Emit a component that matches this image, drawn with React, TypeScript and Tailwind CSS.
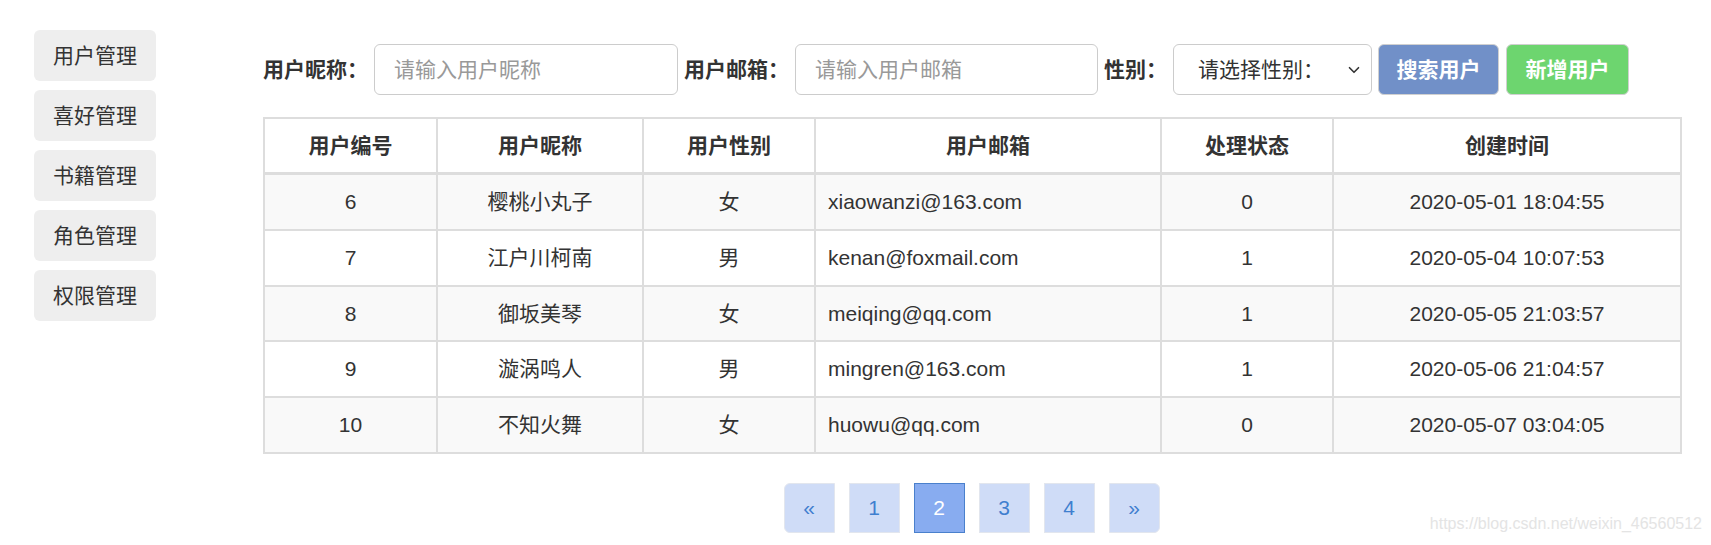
import { ChevronDown } from "lucide-react";

type User = {
  id: number;
  nickname: string;
  gender: string;
  email: string;
  status: number;
  createdAt: string;
};

const users: User[] = [
  { id: 6, nickname: "樱桃小丸子", gender: "女", email: "xiaowanzi@163.com", status: 0, createdAt: "2020-05-01 18:04:55" },
  { id: 7, nickname: "江户川柯南", gender: "男", email: "kenan@foxmail.com", status: 1, createdAt: "2020-05-04 10:07:53" },
  { id: 8, nickname: "御坂美琴", gender: "女", email: "meiqing@qq.com", status: 1, createdAt: "2020-05-05 21:03:57" },
  { id: 9, nickname: "漩涡鸣人", gender: "男", email: "mingren@163.com", status: 1, createdAt: "2020-05-06 21:04:57" },
  { id: 10, nickname: "不知火舞", gender: "女", email: "huowu@qq.com", status: 0, createdAt: "2020-05-07 03:04:05" },
];

const menu = ["用户管理", "喜好管理", "书籍管理", "角色管理", "权限管理"];

const headers = ["用户编号", "用户昵称", "用户性别", "用户邮箱", "处理状态", "创建时间"];

const Sidebar = () => (
  <div className="w-[263px] shrink-0 pl-[34px] pt-[30px] flex flex-col gap-[9px]">
    {menu.map((item) => (
      <button
        key={item}
        className="w-[122px] h-[51px] rounded-[6px] bg-[#eeeeee] text-[21px] text-[#333] flex items-center justify-center"
      >
        {item}
      </button>
    ))}
  </div>
);

const SearchBar = () => (
  <div className="flex items-center h-[51px] gap-[6px]">
    <span className="text-[21px] font-bold text-[#333]">用户昵称：</span>
    <input
      placeholder="请输入用户昵称"
      className="w-[304px] h-[51px] rounded-[6px] border border-[#cccccc] px-[19px] text-[21px] text-[#555] placeholder:text-[#999] outline-none"
    />
    <span className="text-[21px] font-bold text-[#333]">用户邮箱：</span>
    <input
      placeholder="请输入用户邮箱"
      className="w-[303px] h-[51px] rounded-[6px] border border-[#cccccc] px-[19px] text-[21px] text-[#555] placeholder:text-[#999] outline-none"
    />
    <span className="text-[21px] font-bold text-[#333]">性别：</span>
    <div className="relative w-[199px] h-[51px]">
      <select className="appearance-none w-full h-full rounded-[6px] border border-[#cccccc] bg-white pl-[24px] text-[21px] text-[#333] outline-none">
        <option>请选择性别：</option>
        <option>男</option>
        <option>女</option>
      </select>
      <ChevronDown
        size={18}
        strokeWidth={2.2}
        className="absolute right-[9px] top-[17px] text-[#333] pointer-events-none"
      />
    </div>
    <button className="w-[121px] h-[51px] rounded-[6px] border border-[#d0d0d0] bg-[#7190c8] text-white text-[21px] font-bold">
      搜索用户
    </button>
    <button className="w-[123px] h-[51px] rounded-[6px] border border-[#d0d0d0] bg-[#6dd56f] text-white text-[21px] font-bold ml-[1px]">
      新增用户
    </button>
  </div>
);

const UserTable = () => (
  <table className="w-[1417px] table-fixed border-collapse border-2 border-[#dddddd] text-[21px] text-[#333] mt-[22px]">
    <colgroup>
      <col className="w-[173px]" />
      <col className="w-[206px]" />
      <col className="w-[172px]" />
      <col className="w-[346px]" />
      <col className="w-[172px]" />
      <col className="w-[348px]" />
    </colgroup>
    <thead>
      <tr>
        {headers.map((h) => (
          <th
            key={h}
            className="border-2 border-b-[3px] border-[#dddddd] py-[11px] leading-[31px] font-bold text-center"
          >
            {h}
          </th>
        ))}
      </tr>
    </thead>
    <tbody>
      {users.map((u, i) => (
        <tr key={u.id} className={i % 2 === 0 ? "bg-[#f9f9f9]" : "bg-white"}>
          <td className="border-2 border-[#dddddd] py-[11px] leading-[31.8px] text-center">{u.id}</td>
          <td className="border-2 border-[#dddddd] py-[11px] leading-[31.8px] text-center">{u.nickname}</td>
          <td className="border-2 border-[#dddddd] py-[11px] leading-[31.8px] text-center">{u.gender}</td>
          <td className="border-2 border-[#dddddd] py-[11px] leading-[31.8px] text-left px-[12px]">{u.email}</td>
          <td className="border-2 border-[#dddddd] py-[11px] leading-[31.8px] text-center">{u.status}</td>
          <td className="border-2 border-[#dddddd] py-[11px] leading-[31.8px] text-center">{u.createdAt}</td>
        </tr>
      ))}
    </tbody>
  </table>
);

const Pagination = () => {
  const pages = ["«", "1", "2", "3", "4", "»"];
  return (
    <div className="w-[1417px] flex justify-center mt-[29px]">
      <div className="flex gap-[14px]">
        {pages.map((p, i) => {
          const active = p === "2";
          const first = i === 0;
          const last = i === pages.length - 1;
          return (
            <button
              key={p}
              className={`w-[51px] h-[50px] flex items-center justify-center text-[21px] border ${
                active
                  ? "bg-[#88acf0] border-[#4a80cc] text-white"
                  : "bg-[#cfdcf7] border-[#e2e6ee] text-[#3f7fcf]"
              } ${first ? "rounded-l-[6px]" : ""} ${last ? "rounded-r-[6px]" : ""}`}
            >
              {p}
            </button>
          );
        })}
      </div>
    </div>
  );
};

export default function App() {
  return (
    <div
      className="relative w-[1711px] h-[545px] bg-white flex"
      style={{ fontFamily: '"Liberation Sans", "Noto Sans CJK SC", sans-serif' }}
    >
      <Sidebar />
      <div className="pt-[44px]">
        <SearchBar />
        <UserTable />
        <Pagination />
      </div>
      <span className="absolute right-[9px] bottom-[9px] text-[16px] text-[#e4e4e4]">
        https://blog.csdn.net/weixin_46560512
      </span>
    </div>
  );
}
